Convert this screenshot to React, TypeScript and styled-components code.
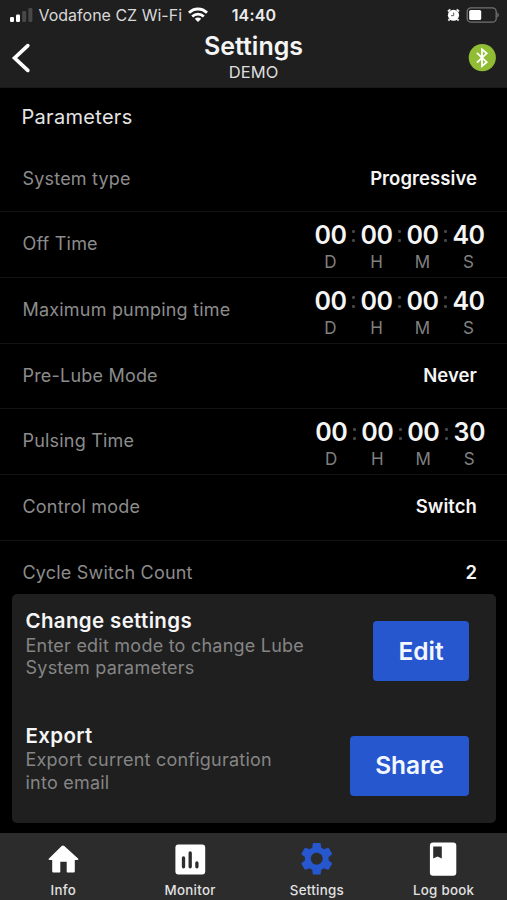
import React from "react";
import styled, { createGlobalStyle } from "styled-components";

const GlobalStyle = createGlobalStyle`
  *, *::before, *::after { box-sizing: border-box; }
  body { margin: 0; background: #000; }
`;

const Screen = styled.div`
  display: flex;
  flex-direction: column;
  width: 507px;
  height: 900px;
  overflow: hidden;
  background: #000;
  color: #f5f5f5;
  font-family: Inter, "Liberation Sans", sans-serif;
  white-space: nowrap;
`;

const Header = styled.header`
  flex: none;
  height: 88px;
  background: #1f1f1f;
  border-bottom: 1px solid #191919;
`;

const StatusBar = styled.div`
  display: grid;
  grid-template-columns: 1fr auto 1fr;
  align-items: center;
  height: 30px;
  padding: 0 8px 0 9px;
`;

const Carrier = styled.div`
  display: flex;
  align-items: center;
  gap: 5.5px;
  font-size: 16px;
  line-height: 20px;
  letter-spacing: 0;
  color: #d8d8d8;
`;

const Clock = styled.div`
  font-size: 16px;
  line-height: 20px;
  font-weight: 600;
  letter-spacing: 0.2px;
  color: #ececec;
`;

const StatusIcons = styled.div`
  display: flex;
  align-items: center;
  justify-content: flex-end;
  gap: 6px;
  height: 20px;
`;

const NavBar = styled.div`
  display: grid;
  grid-template-columns: 1fr auto 1fr;
  height: 56px;
  padding: 0 11px;
`;

const BackButton = styled.button`
  justify-self: start;
  height: 56px;
  padding: 0;
  border: 0;
  background: none;
  line-height: 0;
`;

const Titles = styled.div`
  text-align: center;
`;

const Title = styled.h1`
  margin: 0;
  padding-top: 1px;
  font-size: 25px;
  line-height: 30px;
  font-weight: 600;
  letter-spacing: 0;
`;

const Subtitle = styled.div`
  font-size: 16.5px;
  line-height: 22px;
  letter-spacing: 0.1px;
  color: #dedede;
`;

const Bluetooth = styled.div`
  justify-self: end;
  align-self: center;
  line-height: 0;
`;

const Content = styled.main`
  position: relative;
  flex: none;
  height: 745px;
  overflow: hidden;
`;

const SectionTitle = styled.h2`
  margin: 0;
  padding: 14px 21.5px 0;
  height: 58.6px;
  font-size: 20px;
  line-height: 30px;
  font-weight: 400;
  letter-spacing: 0.3px;
  color: #e4e4e4;
`;

const Row = styled.div`
  display: flex;
  justify-content: space-between;
  height: 65.7px;
  border-bottom: 1px solid #121212;

  &:nth-of-type(7) {
    border-bottom: 0;
  }
`;

const RowLabel = styled.div`
  padding-left: 22.5px;
  font-size: 18px;
  line-height: 64px;
  letter-spacing: 0.2px;
  color: #8c8c8c;
`;

const RowValue = styled.div`
  padding-right: 30px;
  font-size: 18.5px;
  line-height: 62px;
  font-weight: 600;
  letter-spacing: 0.06px;
`;

const Duration = styled.div<{ $shift: number }>`
  display: grid;
  grid-template-columns: 31px 15px 31px 15px 31px 15px 31px;
  grid-template-rows: 31px 22px;
  justify-items: center;
  padding: 7.7px ${(p) => 23 - p.$shift}px 0 0;
`;

const Digits = styled.div`
  font-size: 25px;
  line-height: 31px;
  font-weight: 600;
  letter-spacing: -0.5px;
`;

const Separator = styled.div`
  display: flex;
  flex-direction: column;
  gap: 6px;
  padding-top: 10.5px;

  &::before,
  &::after {
    content: "";
    width: 3px;
    height: 3px;
    border-radius: 1px;
    background: #444;
  }
`;

const Unit = styled.div<{ $column: number }>`
  grid-row: 2;
  grid-column: ${(p) => p.$column};
  font-size: 17px;
  line-height: 23px;
  color: #808080;
`;

const ActionCard = styled.section`
  position: absolute;
  left: 12px;
  bottom: 10px;
  width: 484px;
  height: 229px;
  padding: 14px 27px 0 13.5px;
  border-radius: 5px;
  background: #1f1f1f;
`;

const Action = styled.div`
  display: flex;
  justify-content: space-between;
  height: 114.5px;
`;

const ActionTitle = styled.h3`
  margin: 0;
  font-size: 20.5px;
  line-height: 26px;
  font-weight: 600;
  letter-spacing: 0.35px;
`;

const ActionText = styled.p`
  margin: 0;
  padding-top: 0.5px;
  font-size: 18px;
  line-height: 22.5px;
  letter-spacing: 0.23px;
  color: #858585;
`;

const ActionButton = styled.button<{ $width: number }>`
  width: ${(p) => p.$width}px;
  height: 60px;
  margin-top: 13px;
  padding: 0;
  border: 0;
  border-radius: 4px;
  background: #2757cf;
  color: #f4f7ff;
  font: 600 24.5px/59px Inter, "Liberation Sans", sans-serif;
`;

const TabBar = styled.nav`
  display: grid;
  grid-template-columns: repeat(4, 1fr);
  flex: none;
  height: 67px;
  background: #2c2c2c;
`;

const Tab = styled.div<{ $active?: boolean }>`
  display: flex;
  flex-direction: column;
  align-items: center;
  padding-top: 8px;
  color: ${(p) => (p.$active ? "#2757cf" : "#fff")};
`;

const TabLabel = styled.span`
  margin-top: 4px;
  font-size: 13.3px;
  line-height: 18px;
  font-weight: 500;
  letter-spacing: 0.3px;
  color: #e2e2e2;
`;

const SignalIcon = () => (
  <svg width="24" height="16" viewBox="0 0 24 16">
    <rect x="1" y="10" width="4" height="5" rx="1.2" fill="#fff" />
    <rect x="7" y="7.6" width="4" height="7.4" rx="1.2" fill="#fff" />
    <rect x="13.2" y="4" width="4" height="11" rx="1.2" fill="#484848" />
    <rect x="19.4" y="1" width="4" height="14" rx="1.2" fill="#484848" />
  </svg>
);

const WifiIcon = () => (
  <svg width="20" height="16" viewBox="0 0 20 16" fill="none" stroke="#fff" strokeWidth="2.8">
    <path d="M1 5.8C6 .7 14 .7 19 5.8" />
    <path d="M4.2 9.4c3.3-3.1 8.3-3.1 11.6 0" />
    <path d="M6.8 11.8c1.8-1.7 4.6-1.7 6.4 0L10 15z" fill="#fff" stroke="none" />
  </svg>
);

const AlarmIcon = () => (
  <svg width="13" height="14" viewBox="0 0 14 15">
    <path d="M1 3.7 3.6 1.4M13 3.7 10.4 1.4M2.8 12 1.5 13.5M11.2 12l1.3 1.5" stroke="#eee" strokeWidth="2" />
    <circle cx="7" cy="7.8" r="6" fill="#fff" />
    <path d="M7.2 4.8v3.4H4.4" fill="none" stroke="#555" strokeWidth="1" />
  </svg>
);

const BatteryIcon = () => (
  <svg width="33" height="16" viewBox="0 0 33 16">
    <rect x="1.2" y=".8" width="29" height="14.4" rx="3.8" fill="none" stroke="#737373" strokeWidth="1.3" />
    <rect x="3.2" y="2.9" width="12" height="10.2" rx="1.7" fill="#fff" />
    <path d="M31.3 5.5c2 .7 2 4.3 0 5z" fill="#737373" />
  </svg>
);

const BackIcon = () => (
  <svg width="20" height="56" viewBox="0 0 20 56">
    <path d="M16.8 15.6 3.6 28l13.2 12.4" fill="none" stroke="#fff" strokeWidth="3.7" strokeLinecap="round" />
  </svg>
);

const BluetoothIcon = () => (
  <svg width="28" height="28" viewBox="0 0 28 28">
    <circle cx="14.3" cy="13.6" r="13.6" fill="#91bd35" />
    <path d="m8.9 8.8 9.8 9.3-4.7 3.9V5.4l4.7 3.9-9.8 9.3" fill="none" stroke="#fff" strokeWidth="1.8" />
  </svg>
);

const HomeIcon = () => (
  <svg width="36" height="36" viewBox="0 0 36 36" fill="currentColor">
    <path d="M16.7 5q1.3-1.1 2.6 0L33 17.4c.7.7.4 1.5-.5 1.5h-2.7v11.2c0 1-.5 1.5-1.5 1.5h-5.6c-.7 0-1-.3-1-1V20.8h-6.4v9.8c0 .7-.3 1-1 1H8.7c-1 0-1.5-.5-1.5-1.5V18.9H4.5c-.9 0-1.2-.8-.5-1.5z" />
  </svg>
);

const ChartIcon = () => (
  <svg width="36" height="36" viewBox="0 0 36 36">
    <rect x="3.4" y="3.4" width="29.8" height="30" rx="3" fill="currentColor" />
    <path d="M11.5 17v8.8M18.2 12v13.8M24.9 22v3.8" stroke="#2c2c2c" strokeWidth="3.3" strokeLinecap="round" />
  </svg>
);

const GearIcon = () => (
  <svg width="39.5" height="39.5" viewBox="0 0 24 24" fill="currentColor">
    <path d="M19.14 12.94c.04-.3.06-.61.06-.94 0-.32-.02-.64-.07-.94l2.03-1.58c.18-.14.23-.41.12-.61l-1.92-3.32c-.12-.22-.37-.29-.59-.22l-2.39.96c-.5-.38-1.03-.7-1.62-.94L14.4 2.81c-.04-.24-.24-.41-.48-.41h-3.84c-.24 0-.43.17-.47.41L9.25 5.35C8.66 5.59 8.12 5.92 7.63 6.29L5.24 5.33c-.22-.08-.47 0-.59.22L2.74 8.87c-.12.21-.08.47.12.61l2.03 1.58c-.05.3-.09.63-.09.94s.02.64.07.94l-2.03 1.58c-.18.14-.23.41-.12.61l1.92 3.32c.12.22.37.29.59.22l2.39-.96c.5.38 1.03.7 1.62.94l.36 2.54c.05.24.24.41.48.41h3.84c.24 0 .44-.17.47-.41l.36-2.54c.59-.24 1.13-.56 1.62-.94l2.39.96c.22.08.47 0 .59-.22l1.92-3.32c.12-.22.07-.47-.12-.61zM12 15.6c-1.98 0-3.6-1.62-3.6-3.6s1.62-3.6 3.6-3.6 3.6 1.62 3.6 3.6-1.62 3.6-3.6 3.6z" />
  </svg>
);

const BookIcon = () => (
  <svg width="36" height="36" viewBox="0 0 36 36">
    <rect x="3.9" y="1.6" width="26.4" height="33.2" rx="3.2" fill="currentColor" />
    <path d="M7.2 5.4h8.6v12.2l-4.3-2.2-4.3 2.2z" fill="#2c2c2c" />
  </svg>
);

const IconSlot = styled.div`
  display: flex;
  align-items: center;
  justify-content: center;
  height: 36px;
`;

type Parameter = { label: string; shift?: number; value: string | string[] };

const parameters: Parameter[] = [
  { label: "System type", value: "Progressive" },
  { label: "Off Time", value: ["00", "00", "00", "40"] },
  { label: "Maximum pumping time", value: ["00", "00", "00", "40"] },
  { label: "Pre-Lube Mode", value: "Never" },
  { label: "Pulsing Time", value: ["00", "00", "00", "30"], shift: 0.7 },
  { label: "Control mode", value: "Switch" },
  { label: "Cycle Switch Count", value: "2" },
];

const units = ["D", "H", "M", "S"];

const DurationValue = ({ parts, shift = 0 }: { parts: string[]; shift?: number }) => (
  <Duration $shift={shift}>
    {parts.map((part, i) => (
      <React.Fragment key={i}>
        {i > 0 && <Separator />}
        <Digits>{part}</Digits>
      </React.Fragment>
    ))}
    {units.map((unit, i) => (
      <Unit key={unit} $column={i * 2 + 1}>{unit}</Unit>
    ))}
  </Duration>
);

const tabs = [
  { label: "Info", Icon: HomeIcon },
  { label: "Monitor", Icon: ChartIcon },
  { label: "Settings", Icon: GearIcon, active: true },
  { label: "Log book", Icon: BookIcon },
];

export default function App() {
  return (
    <Screen>
      <GlobalStyle />
      <Header>
        <StatusBar>
          <Carrier>
            <SignalIcon />
            Vodafone CZ Wi-Fi
            <WifiIcon />
          </Carrier>
          <Clock>14:40</Clock>
          <StatusIcons>
            <AlarmIcon />
            <BatteryIcon />
          </StatusIcons>
        </StatusBar>
        <NavBar>
          <BackButton aria-label="Back"><BackIcon /></BackButton>
          <Titles>
            <Title>Settings</Title>
            <Subtitle>DEMO</Subtitle>
          </Titles>
          <Bluetooth><BluetoothIcon /></Bluetooth>
        </NavBar>
      </Header>
      <Content>
        <SectionTitle>Parameters</SectionTitle>
        {parameters.map(({ label, shift, value }) => (
          <Row key={label}>
            <RowLabel>{label}</RowLabel>
            {typeof value === "string"
              ? <RowValue>{value}</RowValue>
              : <DurationValue parts={value} shift={shift} />}
          </Row>
        ))}
        <ActionCard>
          <Action>
            <div>
              <ActionTitle>Change settings</ActionTitle>
              <ActionText>Enter edit mode to change Lube<br />System parameters</ActionText>
            </div>
            <ActionButton $width={96}>Edit</ActionButton>
          </Action>
          <Action>
            <div>
              <ActionTitle>Export</ActionTitle>
              <ActionText>Export current configuration<br />into email</ActionText>
            </div>
            <ActionButton $width={119}>Share</ActionButton>
          </Action>
        </ActionCard>
      </Content>
      <TabBar>
        {tabs.map(({ label, Icon, active }) => (
          <Tab key={label} $active={active}>
            <IconSlot><Icon /></IconSlot>
            <TabLabel>{label}</TabLabel>
          </Tab>
        ))}
      </TabBar>
    </Screen>
  );
}
